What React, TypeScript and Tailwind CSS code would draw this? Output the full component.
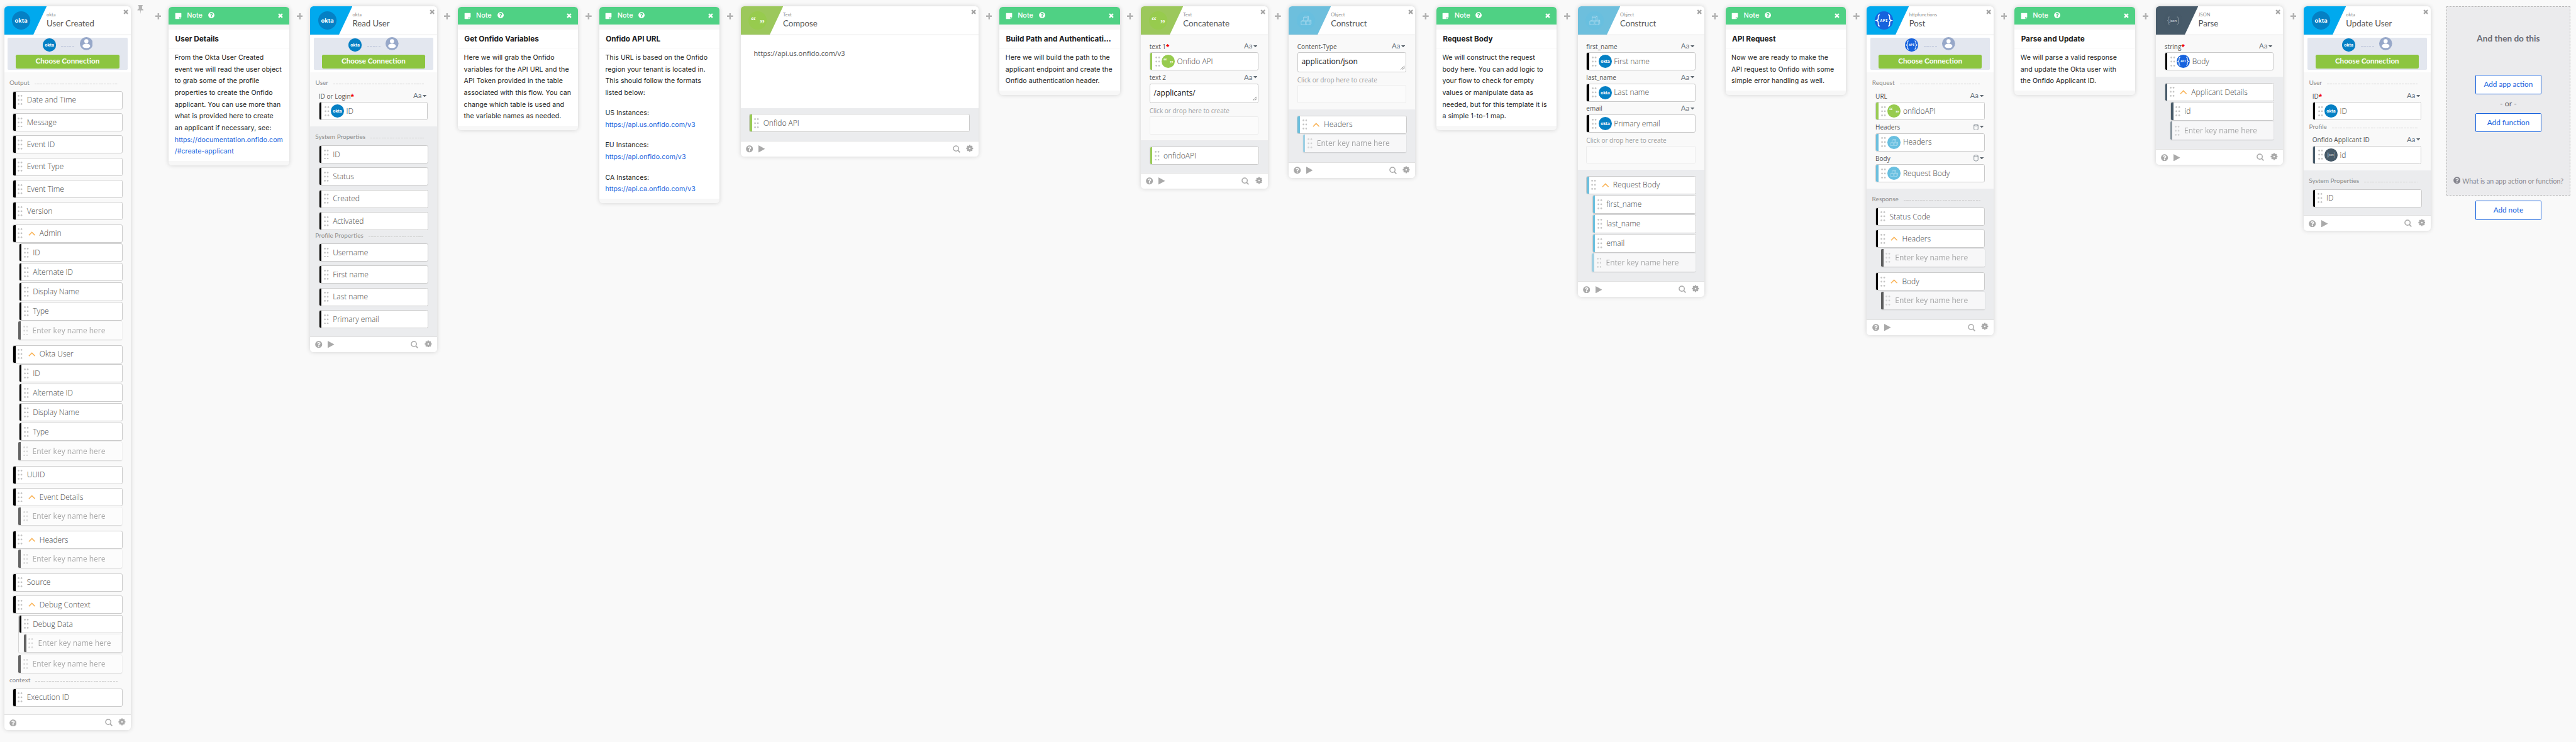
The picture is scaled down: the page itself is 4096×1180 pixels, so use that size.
import type { ReactNode } from 'react'
import { FaQuestionCircle, FaStickyNote } from 'react-icons/fa'

/* ---------- icons ---------- */

function Cross({ className }: { className: string }) {
  return (
    <svg viewBox="0 0 10 10" className={className}>
      <path d="M1.3 1.3 8.7 8.7M8.7 1.3 1.3 8.7" stroke="currentColor" strokeWidth="3" />
    </svg>
  )
}

function Plus() {
  return (
    <svg viewBox="0 0 11 11" className="mt-[12.4px] h-[11px] w-[11px] text-[#b3b3b3]">
      <path d="M5.5 0v11M0 5.5h11" stroke="currentColor" strokeWidth="2.8" />
    </svg>
  )
}

function Pin() {
  return (
    <svg viewBox="0 0 12 16" className="h-[16px] w-[12px] text-[#b5b5b5]">
      <path
        fill="currentColor"
        d="M2 0h8v2H9v4.400c1.400.6 2.400 1.700 2.500 3.200H6.700L6 16l-.7-6.400H.5C.6 8.100 1.600 7 3 6.400V2H2z"
      />
    </svg>
  )
}

function Dots() {
  return (
    <svg viewBox="0 0 9 18" className="h-[18px] w-[9px] shrink-0" fill="#c4c4c4">
      {[1.6, 9, 16.4].map((y) => (
        <g key={y}>
          <circle cx="1.800" cy={y} r="1.550" />
          <circle cx="6.900" cy={y} r="1.550" />
        </g>
      ))}
    </svg>
  )
}

function Chevron() {
  return (
    <svg viewBox="0 0 13 8" className="ml-[9.600px] mr-[7.600px] h-[8px] w-[13px] shrink-0">
      <path d="M1 7 6.500 1.600 12 7" fill="none" stroke="#f9b357" strokeWidth="1.700" />
    </svg>
  )
}

function Caret() {
  return (
    <svg viewBox="0 0 7 4" className="h-[4px] w-[7px]">
      <path d="M0 0h7L3.500 4z" fill="#5f6870" />
    </svg>
  )
}

function Gear() {
  return (
    <svg viewBox="-7 -7 14 14" className="mt-[-3px] h-[13.500px] w-[13.500px]" fill="currentColor">
      {[0, 45, 90, 135].map((a) => (
        <rect key={a} x="-1.400" y="-6.500" width="2.800" height="13" rx="0.400" transform={`rotate(${a})`} mask="url(#hub)" />
      ))}
      <mask id="hub" maskUnits="userSpaceOnUse" x="-7" y="-7" width="14" height="14">
        <rect x="-7" y="-7" width="14" height="14" fill="#fff" />
        <circle r="2" fill="#000" />
      </mask>
      <circle r="3.400" fill="none" stroke="currentColor" strokeWidth="2.800" />
    </svg>
  )
}

function Magnifier() {
  return (
    <svg viewBox="0 0 14 14" className="h-[13.500px] w-[13.500px]" fill="none" stroke="currentColor">
      <circle cx="6" cy="6" r="4.900" strokeWidth="1.700" />
      <path d="M9.500 9.500 13.300 13.300" strokeWidth="2.100" />
    </svg>
  )
}

function Play() {
  return (
    <svg viewBox="0 0 12 13" className="ml-[9.500px] h-[13px] w-[12px]">
      <path d="M0 0 12 6.500 0 13z" fill="currentColor" />
    </svg>
  )
}

function Person() {
  return (
    <svg viewBox="0 0 24 24" className="h-[23.400px] w-[23.400px]">
      <circle cx="12" cy="12" r="12" fill="#97a8c9" />
      <circle cx="12" cy="7.600" r="3.800" fill="#fff" />
      <path d="M5 16.600c0-2.700 3.200-4.300 7-4.300s7 1.600 7 4.300c0 2.400-3.200 3.600-7 3.600s-7-1.200-7-3.600z" fill="#fff" />
    </svg>
  )
}

type App = 'okta' | 'api' | 'text' | 'object' | 'json'

function AppIcon({ app, className }: { app: App; className: string }) {
  return (
    <svg viewBox="0 0 34 34" className={`overflow-visible ${className}`}>
      {app === 'okta' && (
        <>
          <circle cx="17" cy="17" r="17" fill="#0580c4" />
          <text x="17" y="20.600" textAnchor="middle" textLength="23.500" lengthAdjust="spacingAndGlyphs" className="fill-white font-[Inter] text-[10px] font-bold">
            okta
          </text>
        </>
      )}
      {app === 'api' && (
        <>
          <circle cx="17" cy="17" r="17" fill="#1662dd" />
          <path
            d="M9.500 6.500C5.500 6.500 6.600 10 6.400 13c-.1 2.500-1 3.500-2.900 4 1.900.5 2.800 1.500 2.900 4 .2 3-.9 6.500 3.100 6.500M24.500 6.500c4 0 2.900 3.500 3.100 6.500.1 2.500 1 3.500 2.900 4-1.900.5-2.800 1.500-2.900 4-.2 3 .9 6.500-3.100 6.500"
            fill="none"
            stroke="#fff"
            strokeWidth="1.800"
          />
          <text x="17" y="19.900" textAnchor="middle" textLength="14" className="fill-white font-['DejaVu_Sans_Mono'] text-[7.500px] font-bold">
            API
          </text>
        </>
      )}
      {app === 'text' && (
        <>
          <circle cx="17" cy="17" r="17" fill="#97cb4e" />
          <text x="9" y="23" textAnchor="middle" className="fill-white/85 font-['Liberation_Serif'] text-[19px] font-bold">
            “
          </text>
          <text x="25.500" y="29" textAnchor="middle" className="fill-white/85 font-['Liberation_Serif'] text-[19px] font-bold">
            ”
          </text>
        </>
      )}
      {app === 'object' && (
        <>
          <circle cx="17" cy="17" r="17" fill="#68bfe0" />
          <g fill="none" stroke="#b5e0f2" strokeWidth="1">
            <path d="M12.500 11h7v6.500h-7zM12.500 11l2-2h7l-2 2M21.500 9v6.500l-2 2" />
            <path d="M8 18.500h8V25H8zM8 18.500l2-1.700h2M17.500 18.500h7V25h-7zM24.500 18.500l2-2v6.500l-2 2M26.500 16.500h-5.500" />
          </g>
        </>
      )}
      {app === 'json' && (
        <>
          <circle cx="17" cy="17" r="17" fill="#465968" />
          <path
            d="M10 10.500c-2 0-2.200 1-2.200 2.500v2.500c0 1-.4 1.500-1.400 1.700 1 .2 1.400.8 1.400 1.800v2.500c0 1.500.2 2.500 2.200 2.500M24 10.500c2 0 2.200 1 2.200 2.500v2.500c0 1 .4 1.500 1.400 1.700-1 .2-1.400.8-1.400 1.800v2.500c0 1.500-.2 2.500-2.200 2.500"
            fill="none"
            stroke="#a9b3bb"
            strokeWidth="0.900"
          />
          <text x="17" y="19.800" textAnchor="middle" textLength="13.500" className="fill-[#c3cbd1] font-['Open_Sans'] text-[7px] font-semibold">
            Json
          </text>
        </>
      )}
    </svg>
  )
}

/* ---------- cards ---------- */

const headerColor: Record<App, string> = {
  okta: 'text-[#00a9ee]',
  api: 'text-[#00a9ee]',
  text: 'text-[#9cc85c]',
  object: 'text-[#6dbfdd]',
  json: 'text-[#475a69]',
}

function Gap() {
  return (
    <div className="flex w-[37.800px] shrink-0 justify-center">
      <Plus />
    </div>
  )
}

function Connection({ app }: { app: App }) {
  return (
    <div className="h-[66.700px] bg-white px-[6.400px] pt-[4.500px]">
      <div className="flex h-[58px] flex-col items-center rounded-[2px] bg-[#e3e7ef]">
        <div className="flex h-[30.700px] w-[90px] items-start">
          <AppIcon app={app} className="mt-[1px] h-[24px] w-[24px]" />
          <div className="ml-[9.600px] mt-[9.700px] flex w-[24px] flex-col gap-[4px]">
            <div className="h-px bg-[repeating-linear-gradient(90deg,#b9c1d8_0_3.500px,transparent_3.500px_5px)]" />
            <div className="h-px bg-[repeating-linear-gradient(90deg,#b9c1d8_0_3.500px,transparent_3.500px_5px)]" />
          </div>
          <div className="ml-[9px] mt-[-1.200px]">
            <Person />
          </div>
        </div>
        <div className="h-[25px] w-[186.400px] rounded-[2.500px] bg-[#8cc540] text-center font-[Lato] text-[13.200px] leading-[22px] font-bold text-white">
          Choose Connection
        </div>
      </div>
    </div>
  )
}

function Card({
  app,
  kind,
  title,
  connect,
  noPlay,
  className = 'w-[228.200px]',
  children,
}: {
  app: App
  kind: string
  title: string
  connect?: boolean
  noPlay?: boolean
  className?: string
  children: ReactNode
}) {
  return (
    <div className={`shrink-0 overflow-hidden rounded-[6px] bg-white shadow-[0_0_8px_rgba(0,0,0,0.16)] ${className}`}>
      <div className="flex h-[52px] border-b border-[#e4e4e4]">
        <div className="relative h-[51px] w-[76.200px]">
          <svg viewBox="0 0 76 51" preserveAspectRatio="none" className={`h-[51px] w-[76.200px] ${headerColor[app]}`}>
            <path d="M0 0h76L52 51H0z" fill="currentColor" />
          </svg>
          <AppIcon app={app} className={`absolute top-[9.300px] left-[14.300px] h-[33px] w-[33px] ${app === 'object' ? 'opacity-80' : ''}`} />
        </div>
        <div className="pt-[10px] font-[Lato]">
          <div className="text-[8.500px] leading-[12px] text-[#8d8d8d]">{kind}</div>
          <div className="text-[15px] leading-[17px] text-[#555]">{title}</div>
        </div>
        <Cross className="mt-[5.700px] mr-[4px] ml-auto h-[9px] w-[9.400px] text-[#a3a3a3]" />
      </div>
      {connect && <Connection app={app} />}
      {children}
      <div className="flex h-[28.400px] items-center border-t border-[#dfdfdf] px-[9.200px] text-[#a9a9a9]">
        <FaQuestionCircle className="h-[13px] w-[13px]" />
        {!noPlay && <Play />}
        <div className="ml-auto flex items-center gap-[10.500px]">
          <Magnifier />
          <Gear />
        </div>
      </div>
    </div>
  )
}

function Fields({ children, className = '' }: { children: ReactNode; className?: string }) {
  return <div className={`bg-[#f9f9f9] px-[15.500px] pb-[8.200px] ${className}`}>{children}</div>
}

function Outputs({ children, className = '' }: { children: ReactNode; className?: string }) {
  return <div className={`bg-[#ebecee] px-[15.300px] pb-[7.400px] ${className}`}>{children}</div>
}

function Section({ children, className = 'h-[33.600px] pt-[11.500px]' }: { children: ReactNode; className?: string }) {
  return (
    <div className={`-ml-[6px] ${className}`}>
      <div className="flex h-[15px] w-[195.500px] items-center gap-[9px] font-[Lato] text-[11.400px] leading-[15px] text-[#8c8c8c]">
        {children}
        <div className="mt-[4px] h-px grow bg-[repeating-linear-gradient(90deg,#cfcfcf_0_3.500px,transparent_3.500px_5px)]" />
      </div>
    </div>
  )
}

type Tone = 'black' | 'green' | 'blue' | 'slate'

const strip: Record<Tone, string> = {
  black: 'bg-black',
  green: 'bg-[#99cb55]',
  blue: 'bg-[#6dbfdd]',
  slate: 'bg-[#475a69]',
}

function Row({
  tone = 'black',
  group,
  className = 'mb-[7.030px]',
  children,
}: {
  tone?: Tone
  group?: boolean
  className?: string
  children: ReactNode
}) {
  return (
    <div className={`flex h-[33px] items-center overflow-hidden rounded-[3px] border border-[#cbcbcb] bg-white ${className}`}>
      <div className={`mr-[4px] h-full w-[4px] shrink-0 ${strip[tone]}`} />
      <Dots />
      {group && <Chevron />}
      <div className={`font-['Open_Sans'] text-[13.600px] leading-[20px] font-light text-[#444] ${group ? '' : 'ml-[7.400px]'}`}>{children}</div>
    </div>
  )
}

const childRow = 'ml-[10.700px] mb-[2.130px]'
const groupRow = 'mb-[1.700px]'

function NewKey({ tone = 'black', className = 'ml-[10.500px] mb-[10.200px]' }: { tone?: Tone; className?: string }) {
  return (
    <div className={`mr-[1px] flex h-[32px] items-center overflow-hidden rounded-[2px] bg-white opacity-60 shadow-[0_1px_2px_rgba(0,0,0,0.25)] ${className}`}>
      <div className={`mr-[4px] h-full w-[4px] shrink-0 ${strip[tone]}`} />
      <Dots />
      <div className="ml-[8px] font-['Open_Sans'] text-[13.600px] leading-[20px] text-[#757575]">Enter key name here</div>
    </div>
  )
}

function Label({ text, required, type = 'text' }: { text: string; required?: boolean; type?: 'text' | 'object' }) {
  return (
    <div className="flex h-[20px] items-center font-['Open_Sans'] text-[11.350px] leading-[20px] text-[#555]">
      {text}
      {required && <span className="font-bold text-[#f00000]">*</span>}
      <div className="mr-[2.800px] -mt-[2px] ml-auto flex items-center gap-[2px]">
        {type === 'text' ? (
          <span className="font-[Lato] text-[13px] leading-[14px] text-[#6b7782]">Aa</span>
        ) : (
          <svg viewBox="0 0 9 12" className="h-[12px] w-[9px]" fill="none" stroke="#7b848c" strokeWidth="1">
            <ellipse cx="4.500" cy="2.200" rx="3.700" ry="1.500" />
            <path d="M.8 2.200v7.600c0 .8 1.700 1.500 3.700 1.500s3.700-.7 3.700-1.500V2.200" />
          </svg>
        )}
        <Caret />
      </div>
    </div>
  )
}

function Field({
  label,
  required,
  type,
  tone = 'black',
  app,
  children,
}: {
  label: string
  required?: boolean
  type?: 'text' | 'object'
  tone?: Tone
  app: App
  children: ReactNode
}) {
  return (
    <div className="mb-[3px]">
      <Label text={label} required={required} type={type} />
      <div className="flex h-[33px] w-[196.500px] items-center overflow-hidden rounded-[3px] border border-[#c9c9c9] bg-white">
        <div className={`mr-[5px] h-full w-[4px] shrink-0 ${strip[tone]}`} />
        <Dots />
        <AppIcon app={app} className="mr-[4px] ml-[2.700px] h-[23.800px] w-[23.800px]" />
        <div className="font-['Open_Sans'] text-[13.600px] leading-[20px] font-light text-[#444]">{children}</div>
      </div>
    </div>
  )
}

function TextField({ label, value }: { label: string; value: string }) {
  return (
    <div className="mb-[3.600px]">
      <Label text={label} />
      <div className="relative h-[35.400px] w-[196.500px] rounded-[3px] border border-[#c9c9c9] bg-white pl-[6.600px] font-['Open_Sans'] text-[13.600px] leading-[32px] text-[#111]">
        {value}
        <svg viewBox="0 0 8 8" className="absolute right-[1px] bottom-[3px] h-[8px] w-[8px]" stroke="#555" strokeWidth="0.900">
          <path d="M.5 7.500 7 1M4 7.500 7.500 4" />
        </svg>
      </div>
    </div>
  )
}

function DropField() {
  return (
    <div className="mb-[3px]">
      <div className="h-[20px] font-['Open_Sans'] text-[11.350px] leading-[20.500px] text-[#9c9c9c]">Click or drop here to create</div>
      <div className="h-[32.600px] w-[196.500px] rounded-[2px] border border-[#ececec] bg-[#fbfbfb]" />
    </div>
  )
}

function Note({ title, blocks }: { title: string; blocks: string[][] }) {
  return (
    <div className="mt-[0.500px] w-[216.800px] shrink-0 overflow-hidden rounded-[6px] bg-[#f7f7f7] shadow-[0_0_8px_rgba(0,0,0,0.16)]">
      <div className="flex h-[32.700px] items-center bg-[#4fd184] pl-[10.800px] text-white">
        <FaStickyNote className="h-[12.500px] w-[12.500px]" />
        <span className="ml-[9.500px] pb-[2px] font-[Inter] text-[12.300px] leading-[16px] font-medium">Note</span>
        <FaQuestionCircle className="mb-[3px] ml-[10px] h-[11.500px] w-[11.500px]" />
        <Cross className="mr-[11.400px] ml-auto h-[9px] w-[9px]" />
      </div>
      <div className="mt-[9.100px] h-[34.700px] border-b border-[#fafafa] bg-white pl-[11.700px] font-[Inter] text-[13.300px] leading-[34.700px] font-bold text-[#1d1d21]">
        {title}
      </div>
      <div className="mb-[8.700px] flex flex-col gap-[15.600px] bg-white py-[5.400px] pl-[10.800px] font-[Inter] text-[12px] leading-[21.150px] tracking-[0.070px] text-[#1d1d21]">
        {blocks.map((p, i) => (
          <div key={i}>
            {p.map((l) => (
              <div key={l} className={`whitespace-nowrap ${/^(https|\/#)/.test(l) ? 'text-[#1662dd]' : ''}`}>
                {l}
              </div>
            ))}
          </div>
        ))}
      </div>
    </div>
  )
}

function ActionButton({ children, className = '' }: { children: ReactNode; className?: string }) {
  return (
    <div
      className={`h-[35px] w-[119px] shrink-0 rounded-[2px] border border-[#1662dd] bg-white text-center font-[Lato] text-[13.300px] leading-[32px] text-[#1662dd] ${className}`}
    >
      {children}
    </div>
  )
}

/* ---------- page ---------- */

export default function App() {
  return (
    <div className="h-[1180px] w-[4096px] overflow-hidden bg-[#f9f9f9]">
      <div className="flex h-[1336px] w-[4638px] items-start pt-[11.500px] pl-[7.600px] [zoom:0.88314]">
        <Card app="okta" kind="okta" title="User Created" connect noPlay>
          <div className="bg-[#f9f9f9] px-[15.300px] pb-[7.400px]">
            <Section>Output</Section>
            {['Date and Time', 'Message', 'Event ID', 'Event Type', 'Event Time', 'Version'].map((t) => (
              <Row key={t}>{t}</Row>
            ))}
            {['Admin', 'Okta User'].map((g) => (
              <div key={g}>
                <Row group className={groupRow}>{g}</Row>
                {['ID', 'Alternate ID', 'Display Name', 'Type'].map((t) => (
                  <Row key={t} className={childRow}>{t}</Row>
                ))}
                <NewKey />
              </div>
            ))}
            <Row>UUID</Row>
            <Row group className={groupRow}>Event Details</Row>
            <NewKey />
            <Row group className={groupRow}>Headers</Row>
            <NewKey />
            <Row>Source</Row>
            <Row group className={groupRow}>Debug Context</Row>
            <div className="mb-[3.200px] ml-[10.500px] h-[69.600px] rounded-[3px] border border-[#d4d4d4] bg-[#f9f9f9]">
              <Row className="-mx-px -mt-px mb-[2px]">Debug Data</Row>
              <NewKey className="ml-[9px]" />
            </div>
            <NewKey className="ml-[10.500px]" />
            <Section className="h-[27.500px] pt-[5.500px]">context</Section>
            <Row>Execution ID</Row>
          </div>
        </Card>

        <div className="flex w-[68px] shrink-0">
          <div className="-mt-[3px] ml-[11px]">
            <Pin />
          </div>
          <div className="ml-[20.600px]">
            <Plus />
          </div>
        </div>

        <Note
          title="User Details"
          blocks={[
            [
              'From the Okta User Created',
              'event we will read the user object',
              'to grab some of the profile',
              'properties to create the Onfido',
              'applicant. You can use more than',
              'what is provided here to create',
              'an applicant if necessary, see:',
              'https://documentation.onfido.com',
              '/#create-applicant',
            ],
          ]}
        />
        <Gap />

        <Card app="okta" kind="okta" title="Read User" connect>
          <Fields>
            <Section>User</Section>
            <Field label="ID or Login" required app="okta">ID</Field>
          </Fields>
          <Outputs>
            <Section>System Properties</Section>
            {['ID', 'Status', 'Created'].map((t) => (
              <Row key={t}>{t}</Row>
            ))}
            <Row className="">Activated</Row>
            <Section className="h-[23.500px] pt-[2px]">Profile Properties</Section>
            {['Username', 'First name', 'Last name', 'Primary email'].map((t) => (
              <Row key={t}>{t}</Row>
            ))}
          </Outputs>
        </Card>
        <Gap />

        <Note
          title="Get Onfido Variables"
          blocks={[
            [
              'Here we will grab the Onfido',
              'variables for the API URL and the',
              'API Token provided in the table',
              'associated with this flow. You can',
              'change which table is used and',
              'the variable names as needed.',
            ],
          ]}
        />
        <Gap />

        <Note
          title="Onfido API URL"
          blocks={[
            ['This URL is based on the Onfido', 'region your tenant is located in.', 'This should follow the formats', 'listed below:'],
            ['US Instances:', 'https://api.us.onfido.com/v3'],
            ['EU Instances:', 'https://api.onfido.com/v3'],
            ['CA Instances:', 'https://api.ca.onfido.com/v3'],
          ]}
        />
        <Gap />

        <Card app="text" kind="Text" title="Compose" className="w-[428.200px]">
          <div className="h-[131px] bg-white pt-[23px] pl-[23.700px] font-['Open_Sans'] text-[12.500px] leading-[20px] text-[#555]">
            https://api.us.onfido.com/v3
          </div>
          <Outputs className="h-[59px] pt-[10.800px]">
            <Row tone="green">Onfido API</Row>
          </Outputs>
        </Card>
        <Gap />

        <Note
          title="Build Path and Authenticati..."
          blocks={[['Here we will build the path to the', 'applicant endpoint and create the', 'Onfido authentication header.']]}
        />
        <Gap />

        <Card app="text" kind="Text" title="Concatenate">
          <Fields className="pt-[10.800px]">
            <Field label="text 1" required tone="green" app="text">Onfido API</Field>
            <TextField label="text 2" value="/applicants/" />
            <DropField />
          </Fields>
          <Outputs className="pt-[10.800px]">
            <Row tone="green">onfidoAPI</Row>
          </Outputs>
        </Card>
        <Gap />

        <Card app="object" kind="Object" title="Construct">
          <Fields className="pt-[10.800px]">
            <TextField label="Content-Type" value="application/json" />
            <DropField />
          </Fields>
          <Outputs className="pt-[10.800px]">
            <Row tone="blue" group className={groupRow}>Headers</Row>
            <NewKey tone="blue" />
          </Outputs>
        </Card>
        <Gap />

        <Note
          title="Request Body"
          blocks={[
            [
              'We will construct the request',
              'body here. You can add logic to',
              'your flow to check for empty',
              'values or manipulate data as',
              'needed, but for this template it is',
              'a simple 1-to-1 map.',
            ],
          ]}
        />
        <Gap />

        <Card app="object" kind="Object" title="Construct">
          <Fields className="pt-[10.800px]">
            <Field label="first_name" app="okta">First name</Field>
            <Field label="last_name" app="okta">Last name</Field>
            <Field label="email" app="okta">Primary email</Field>
            <DropField />
          </Fields>
          <Outputs className="pt-[10.800px]">
            <Row tone="blue" group className={groupRow}>Request Body</Row>
            {['first_name', 'last_name', 'email'].map((t) => (
              <Row key={t} tone="blue" className={childRow}>{t}</Row>
            ))}
            <NewKey tone="blue" />
          </Outputs>
        </Card>
        <Gap />

        <Note title="API Request" blocks={[['Now we are ready to make the', 'API request to Onfido with some', 'simple error handling as well.']]} />
        <Gap />

        <Card app="api" kind="httpfunctions" title="Post" connect>
          <Fields>
            <Section>Request</Section>
            <Field label="URL" tone="green" app="text">onfidoAPI</Field>
            <Field label="Headers" type="object" tone="blue" app="object">Headers</Field>
            <Field label="Body" type="object" tone="blue" app="object">Request Body</Field>
          </Fields>
          <Outputs>
            <Section>Response</Section>
            <Row>Status Code</Row>
            <Row group className={groupRow}>Headers</Row>
            <NewKey />
            <Row group className={groupRow}>Body</Row>
            <NewKey />
          </Outputs>
        </Card>
        <Gap />

        <Note title="Parse and Update" blocks={[['We will parse a valid response', 'and update the Okta user with', 'the Onfido Applicant ID.']]} />
        <Gap />

        <Card app="json" kind="JSON" title="Parse">
          <Fields className="pt-[10.800px]">
            <Field label="string" required app="api">Body</Field>
          </Fields>
          <Outputs className="pt-[10.800px]">
            <Row tone="slate" group className={groupRow}>Applicant Details</Row>
            <Row tone="slate" className={childRow}>id</Row>
            <NewKey tone="slate" />
          </Outputs>
        </Card>
        <Gap />

        <Card app="okta" kind="okta" title="Update User" connect>
          <Fields>
            <Section>User</Section>
            <Field label="ID" required app="okta">ID</Field>
            <Section className="h-[22.800px] pt-[1.500px]">Profile</Section>
            <Field label="Onfido Applicant ID" tone="slate" app="json">id</Field>
          </Fields>
          <Outputs>
            <Section>System Properties</Section>
            <Row>ID</Row>
          </Outputs>
        </Card>

        <div className="ml-[28.800px] flex w-[222.800px] shrink-0 flex-col items-center">
          <div className="flex h-[341px] w-full flex-col items-center border-[1.500px] border-dashed border-[#b4b4b4] bg-[#ebebed]">
            <div className="mt-[46px] font-[Lato] text-[15.400px] leading-[22px] font-bold text-[#6a6a73]">And then do this</div>
            <ActionButton className="mt-[54.500px]">Add app action</ActionButton>
            <div className="mt-[5px] h-[28.200px] font-[Lato] text-[14px] leading-[22px] text-[#66666f]">- or -</div>
            <ActionButton>Add function</ActionButton>
            <div className="mt-[78px] flex items-center gap-[3.500px] font-[Lato] text-[12.100px] leading-[20px] text-[#85858e]">
              <FaQuestionCircle className="mb-[3px] h-[13px] w-[13px]" />
              <span className="whitespace-nowrap">What is an app action or function?</span>
            </div>
          </div>
          <ActionButton className="mt-[8.700px]">Add note</ActionButton>
        </div>
      </div>
    </div>
  )
}
